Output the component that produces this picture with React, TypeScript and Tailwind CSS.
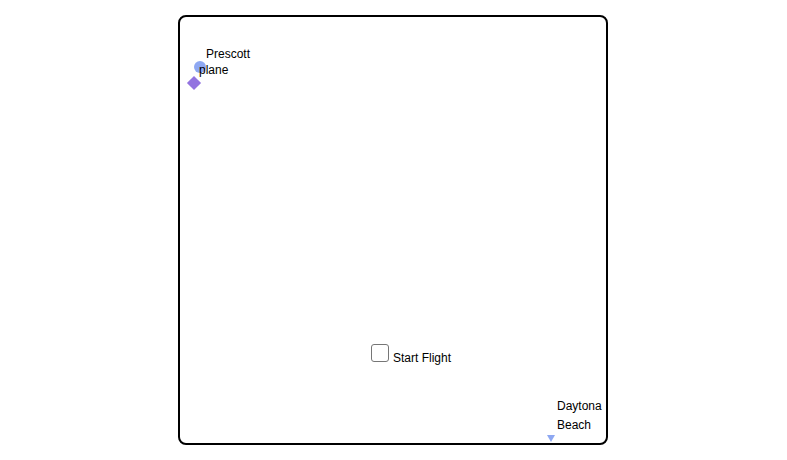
import { useState } from "react";

export default function App() {
  const [flying, setFlying] = useState(false);

  return (
    <div className="w-[787px] h-[460px] bg-white pt-[15px] pl-[178px] font-['Liberation_Sans',Arial,sans-serif] text-[12px] text-black">
      {/* map canvas */}
      <div className="relative w-[430px] h-[430px] border-2 border-black rounded-[8px] overflow-hidden">
        {/* origin city */}
        <div className="absolute left-[14px] top-[44px] w-[12px] h-[12px] rounded-full bg-[#8ea8f2]" />
        <div className="absolute left-[26px] top-[29px] leading-[16px]">Prescott</div>
        <div className="absolute left-[19px] top-[45px] leading-[16px]">plane</div>
        {/* plane marker */}
        <div className="absolute left-[9px] top-[61px] w-[10px] h-[10px] rotate-45 bg-[#9373e0]" />

        {/* destination city */}
        <div className="absolute left-[377px] top-[380px] w-[48px] leading-[19px]">Daytona Beach</div>
        <div className="absolute left-[367px] top-[418px] w-0 h-0 border-l-[4.5px] border-r-[4.5px] border-t-[7px] border-l-transparent border-r-transparent border-t-[#8ea8f2]" />

        {/* controls */}
        <label className="absolute left-[191px] top-[327px] flex items-start gap-[4px] cursor-pointer">
          <input
            type="checkbox"
            checked={flying}
            onChange={(e) => setFlying(e.target.checked)}
            className="appearance-none w-[18px] h-[18px] m-0 border border-[#767676] rounded-[3px] bg-white checked:bg-[#0075ff]"
          />
          <span className="mt-[6px] leading-[16px]">Start Flight</span>
        </label>
      </div>
    </div>
  );
}
